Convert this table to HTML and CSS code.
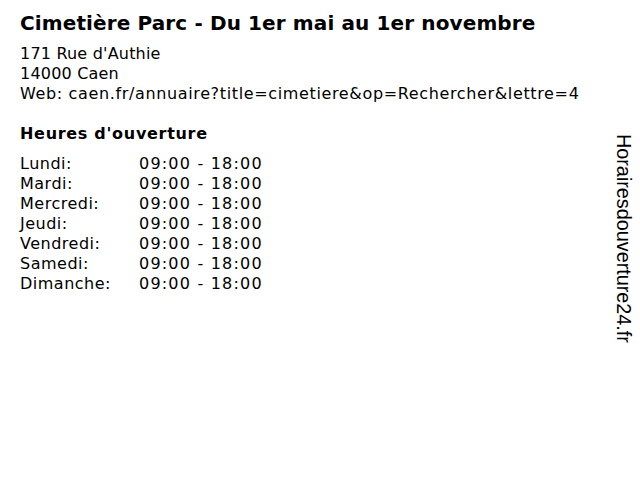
FILE: index.html
```html
<!DOCTYPE html>
<html>
<head>
<meta charset="utf-8">
<link rel="stylesheet" href="styles.css">
</head>
<body>
<div class="page">
  <main class="content">
    <h1 class="title">Cimetière Parc - Du 1er mai au 1er novembre</h1>
    <div class="address">
      <div>171 Rue d'Authie</div>
      <div>14000 Caen</div>
      <div class="web">Web: caen.fr/annuaire?title=cimetiere&amp;op=Rechercher&amp;lettre=4</div>
    </div>
    <h2 class="subtitle">Heures d'ouverture</h2>
    <div class="hours">
      <span class="day">Lundi:</span><span class="time">09:00 - 18:00</span>
      <span class="day">Mardi:</span><span class="time">09:00 - 18:00</span>
      <span class="day">Mercredi:</span><span class="time">09:00 - 18:00</span>
      <span class="day">Jeudi:</span><span class="time">09:00 - 18:00</span>
      <span class="day">Vendredi:</span><span class="time">09:00 - 18:00</span>
      <span class="day">Samedi:</span><span class="time">09:00 - 18:00</span>
      <span class="day">Dimanche:</span><span class="time">09:00 - 18:00</span>
    </div>
  </main>
  <aside class="brand">Horairesdouverture24.fr</aside>
</div>
</body>
</html>
```
FILE: styles.css
```css
html, body {
  margin: 0;
  padding: 0;
  background: #fff;
  color: #000;
}
body {
  font-family: "DejaVu Sans", Verdana, sans-serif;
  font-size: 16px;
  line-height: 20px;
}
.page {
  display: flex;
  justify-content: space-between;
  width: 640px;
  height: 480px;
}
.content {
  padding: 10px 0 0 20px;
}
.title {
  margin: 0;
  font-size: 20px;
  line-height: 26px;
  font-weight: bold;
  letter-spacing: 0.12px;
}
.address {
  margin-top: 8px;
  letter-spacing: 0.2px;
}
.address .web {
  letter-spacing: 0.64px;
}
.subtitle {
  margin: 20px 0 0;
  font-size: 16px;
  line-height: 20px;
  font-weight: bold;
  letter-spacing: 0.7px;
}
.hours {
  margin-top: 10px;
  display: grid;
  grid-template-columns: 119px auto;
}
.day {
  letter-spacing: 0.5px;
}
.time {
  letter-spacing: 1.2px;
}
.brand {
  writing-mode: vertical-rl;
  font-family: "Liberation Sans", Arial, sans-serif;
  font-size: 19.8px;
  line-height: 22px;
  padding: 134px 5px 0 0;
}
```
